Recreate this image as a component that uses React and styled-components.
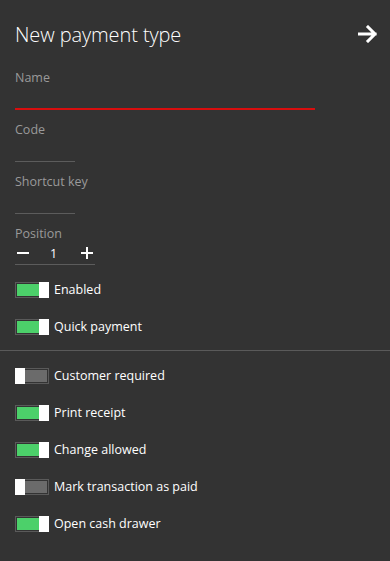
import React from 'react';
import styled, { css, createGlobalStyle } from 'styled-components';

const GlobalStyle = createGlobalStyle`
  html, body {
    margin: 0;
    padding: 0;
    background: #333333;
  }
  body {
    font-family: "Open Sans", "Noto Sans", sans-serif;
  }
`;

const Panel = styled.div`
  width: 390px;
  height: 561px;
  background: #333333;
  color: #ffffff;
  box-sizing: border-box;
  padding-top: 19px;
  overflow: hidden;
`;

const Header = styled.div`
  display: flex;
  align-items: center;
  justify-content: space-between;
  padding: 0 11px 0 15px;
  height: 30px;
`;

const Title = styled.h1`
  margin: 0;
  font-size: 20px;
  font-weight: 300;
  letter-spacing: -0.1px;
  color: #ffffff;
`;

const CloseButton = styled.button`
  background: none;
  border: 0;
  padding: 0;
  width: 22px;
  height: 22px;
  display: flex;
  align-items: center;
  justify-content: center;
  cursor: pointer;
`;

const Form = styled.div`
  padding: 0 15px;
  margin-top: 20px;
`;

const Field = styled.div`
  display: flex;
  flex-direction: column;
  margin-bottom: 11px;

  &:last-child {
    margin-bottom: 6px;
  }
`;

const Label = styled.label`
  font-size: 12.5px;
  color: #9a9a9a;
  line-height: 18px;
`;

const Input = styled.input`
  display: block;
  box-sizing: border-box;
  background: transparent;
  border: 0;
  border-bottom: 1px solid #5c5c5c;
  width: ${(p) => p.$width}px;
  height: 23px;
  padding: 0;
  margin: 0;
  outline: none;
  color: #fff;
  font-family: inherit;
  font-size: 13px;

  ${(p) =>
    p.$error &&
    css`
      border-bottom: 2px solid #d80e0e;
    `}
`;

const Stepper = styled.div`
  display: flex;
  align-items: center;
  justify-content: space-between;
  width: 80px;
  height: 20px;
  border-bottom: 1px solid #5c5c5c;
  padding-bottom: 1px;
`;

const StepButton = styled.span`
  width: 16px;
  display: flex;
  align-items: center;
  justify-content: center;
`;

const StepValue = styled.span`
  font-size: 12.5px;
  color: #fff;
  margin-right: 3px;
`;

const ToggleList = styled.div`
  display: flex;
  flex-direction: column;
  padding: 0 15px;
`;

const ToggleRow = styled.div`
  display: flex;
  align-items: center;
  height: 37px;
  gap: 5px;
`;

const Track = styled.span`
  position: relative;
  box-sizing: border-box;
  width: 34px;
  height: 16px;
  border: 1px solid #5a5a5a;
  padding: 1px;
  display: flex;
`;

const Fill = styled.span`
  flex: 1;
  background: ${(p) => (p.$on ? '#4cd06a' : '#6b6b6b')};
`;

const Knob = styled.span`
  position: absolute;
  top: -1px;
  bottom: -1px;
  width: 10px;
  background: #ffffff;
  ${(p) => (p.$on ? 'right: -1px;' : 'left: -1px;')}
`;

const ToggleLabel = styled.span`
  font-size: 12.5px;
  color: #ffffff;
`;

const Divider = styled.hr`
  border: 0;
  border-top: 1px solid #5a5a5a;
  margin: 5px 0 6px;
`;

const Toggle = ({ on, label }) => (
  <ToggleRow>
    <Track>
      <Fill $on={on} />
      <Knob $on={on} />
    </Track>
    <ToggleLabel>{label}</ToggleLabel>
  </ToggleRow>
);

const App = () => (
  <Panel>
    <GlobalStyle />
    <Header>
      <Title>New payment type</Title>
      <CloseButton aria-label="Next">
        <svg width="20" height="18" viewBox="0 0 20 18">
          <path d="M1 9h16M10 2l7 7-7 7" fill="none" stroke="#fff" strokeWidth="3" strokeLinecap="square" />
        </svg>
      </CloseButton>
    </Header>
    <Form>
      <Field>
        <Label>Name</Label>
        <Input $error $width={300} />
      </Field>
      <Field>
        <Label>Code</Label>
        <Input $width={60} />
      </Field>
      <Field>
        <Label>Shortcut key</Label>
        <Input $width={60} />
      </Field>
      <Field>
        <Label>Position</Label>
        <Stepper>
          <StepButton>
            <svg width="12" height="12" viewBox="0 0 12 12">
              <path d="M0 6h12" stroke="#fff" strokeWidth="2" />
            </svg>
          </StepButton>
          <StepValue>1</StepValue>
          <StepButton>
            <svg width="12" height="12" viewBox="0 0 12 12">
              <path d="M0 6h12M6 0v12" stroke="#fff" strokeWidth="2" />
            </svg>
          </StepButton>
        </Stepper>
      </Field>
    </Form>
    <ToggleList>
      <Toggle on label="Enabled" />
      <Toggle on label="Quick payment" />
    </ToggleList>
    <Divider />
    <ToggleList>
      <Toggle on={false} label="Customer required" />
      <Toggle on label="Print receipt" />
      <Toggle on label="Change allowed" />
      <Toggle on={false} label="Mark transaction as paid" />
      <Toggle on label="Open cash drawer" />
    </ToggleList>
  </Panel>
);

export default App;
